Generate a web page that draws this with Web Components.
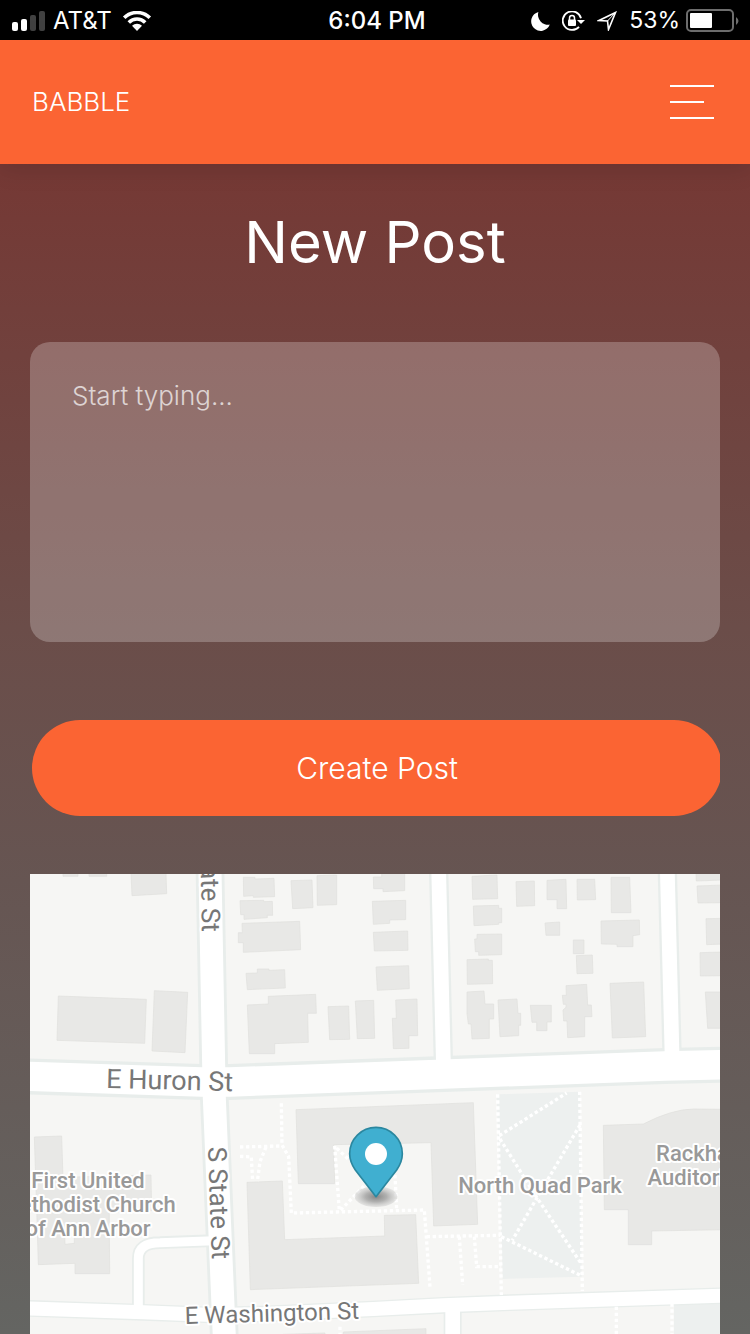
<!DOCTYPE html>
<html lang="en">
<head>
<meta charset="utf-8">
<meta name="viewport" content="width=device-width, initial-scale=1">
<title>Babble – New Post</title>
<style>
html{height:100%}
body{margin:0;min-height:100%;font-family:Inter,"Liberation Sans",sans-serif;color:#fff}
</style>
</head>
<body>
<babble-app></babble-app>

<script>
const define = (name, markup) => {
  const template = document.createElement('template');
  template.innerHTML = markup;
  customElements.define(name, class extends HTMLElement {
    constructor() {
      super();
      this.attachShadow({ mode: 'open' }).append(template.content.cloneNode(true));
    }
  });
};

define('status-bar', `
<style>
:host{display:grid;grid-template-columns:1fr auto 1fr;align-items:center;box-sizing:border-box;height:40px;padding:1px 10px 0 12px;background:#000;font-size:24px;line-height:39px}
div{display:flex;align-items:center}
.left{gap:8px}
.left .wifi{margin-left:2px}
.time{font-weight:500;padding-left:2px}
.right{justify-content:flex-end;gap:12px}
.power{gap:6px}
.power span{font-size:23px}
svg{display:block;flex:none}
</style>
<div class="left">
  <svg width="33" height="20" viewBox="0 0 33 20" aria-label="Signal"><g fill="#fff"><rect y="11" width="6" height="9" rx="2"/><rect x="9" y="8" width="6" height="12" rx="2"/></g><g fill="#414141"><rect x="18" y="4" width="6" height="16" rx="2"/><rect x="27" width="6" height="20" rx="2"/></g></svg>
  <span>AT&amp;T</span>
  <svg class="wifi" width="30" height="20" viewBox="0 0 30 20" aria-label="Wi-Fi"><g fill="none" stroke="#fff" stroke-width="3.600"><path d="M2.200 6.800a18.200 18.200 0 0 1 25.600 0"/><path d="M6.800 11.400a11.600 11.600 0 0 1 16.400 0"/></g><path fill="#fff" d="M10 14.800a7.100 7.100 0 0 1 10 0L15 20z"/></svg>
</div>
<div class="time">6:04 PM</div>
<div class="right">
  <svg width="19" height="20" viewBox="0 0 19 20" aria-label="Do not disturb"><path fill="#fff" d="M7.400 1A10 10 0 0 0 18.800 13.600 9.600 9.600 0 1 1 7.400 1z"/></svg>
  <svg width="23" height="20" viewBox="0 0 23 20" aria-label="Rotation lock"><path d="M19 7.200A9.300 9.300 0 1 0 17 15.800" fill="none" stroke="#fff" stroke-width="1.800"/><path d="M15 9h8l-4 4z" fill="#fff"/><rect x="6" y="8.500" width="8" height="6.500" rx="1" fill="#fff"/><path d="M7.500 9V7a2.500 2.500 0 0 1 5 0v2" fill="none" stroke="#fff" stroke-width="1.500"/></svg>
  <svg width="20" height="20" viewBox="0 0 20 20" aria-label="Location"><path d="M18.500 1.500L2 9.500l8.500.500 1 8.500z" fill="none" stroke="#fff" stroke-width="1.600"/><path d="M18 2L10.500 10" stroke="#fff"/></svg>
  <div class="power"><span>53%</span>
  <svg width="54" height="24" viewBox="0 0 54 24" aria-label="Battery"><rect x="1" y="1" width="46" height="21" rx="4" fill="none" stroke="#6e6e6e" stroke-width="2"/><rect x="4" y="4" width="22" height="15" rx="1" fill="#fff"/><path d="M50 8q5 4 0 8z" fill="#6e6e6e"/></svg></div>
</div>`);

define('app-header', `
<style>
:host{position:relative;display:flex;align-items:center;justify-content:space-between;height:124px;padding:0 36px 0 32px;background:#fb6433;box-shadow:0 4px 24px rgba(0,0,0,.12)}
a{color:#fff;text-decoration:none;font-size:26px;font-weight:300;line-height:30px}
button{display:flex;flex-direction:column;align-items:flex-start;gap:14px;width:44px;padding:0;border:0;background:none;cursor:pointer}
i{display:block;width:100%;height:2px;background:#fff}
i:nth-child(2){width:34px}
</style>
<a href="#"><slot></slot></a>
<button type="button" aria-label="Menu"><i></i><i></i><i></i></button>`);

define('post-composer', `
<style>
:host{display:block}
h1{margin:0 0 66px;font-size:58px;font-weight:400;line-height:68px;text-align:center}
textarea{display:block;box-sizing:border-box;width:100%;height:300px;margin:0 0 78px;padding:39px 42px;border:0;border-radius:20px;background:rgba(255,255,255,.24);color:#fff;font:300 26px/30px Inter,"Liberation Sans",sans-serif;resize:none;outline:0}
textarea::placeholder{color:#fff;opacity:.7}
.action{overflow:hidden}
button{display:block;width:100%;height:96px;margin:0 0 0 2px;border:0;border-radius:48px;background:#fb6433;color:#fff;font:300 30px/36px Inter,"Liberation Sans",sans-serif;cursor:pointer}
</style>
<form>
  <h1><slot></slot></h1>
  <textarea aria-label="Post text" placeholder="Start typing..."></textarea>
  <div class="action"><button type="button">Create Post</button></div>
</form>`);

define('location-map', `
<style>
:host{display:block;overflow:hidden;background:#f6f6f4}
svg{display:block;width:100%;height:100%;min-height:460px}
.case{fill:none;stroke:#e8edeb}
.road{fill:none;stroke:#fff}
.bld{fill:#e8e8e6;stroke:#dfdfdd;stroke-width:2}
.park{fill:#edf0ef}
.walk{fill:none;stroke:#fff;stroke-width:10;stroke-dasharray:10 8}
text{font-family:Roboto,"Liberation Sans",sans-serif;stroke:#fff;stroke-width:4px;stroke-linejoin:round;paint-order:stroke}
.street{fill:#777;font-size:26px}
.place{fill:#999;font-size:22px;font-weight:500;text-anchor:middle}
</style>
<svg viewBox="0 0 690 460" preserveAspectRatio="xMidYMin slice" role="img" aria-label="Map of the post location">
<defs>
  <radialGradient id="shade"><stop offset="0" stop-color="#555" stop-opacity=".7"/><stop offset=".5" stop-color="#777" stop-opacity=".55"/><stop offset="1" stop-color="#aaa" stop-opacity=".25"/></radialGradient>
  <path id="huron" d="M-10 607L515 624H600L1220 601L1905 576L2080 572"/>
  <path id="state" d="M540-10L551 573L553 673L583 1390"/>
  <path id="washington" d="M-10 1303L340 1315L545 1323L700 1320L1030 1305L1240 1294L1440 1286L2080 1265"/>
  <path id="north1" d="M1226-10L1241 600"/><path id="north2" d="M1912-10L1927 575"/>
  <path id="south" d="M1268 1295V1390"/>
  <path id="drive" d="M325 1310V1153Q325 1106 390 1106L550 1100"/>
</defs>
<g transform="scale(.33333)">
  <g class="park"><path d="M1400 661L1650 653L1655 1208L1418 1215z"/><path d="M1932 1270H2080V1390H1932z"/></g>
  <g class="case">
    <use href="#drive" stroke-width="38"/><use href="#south" stroke-width="54"/><use href="#washington" stroke-width="50"/>
    <use href="#north1" stroke-width="58"/><use href="#north2" stroke-width="58"/><use href="#state" stroke-width="86"/><use href="#huron" stroke-width="108"/>
  </g>
  <g class="road">
    <use href="#drive" stroke-width="27"/><use href="#south" stroke-width="44"/><use href="#washington" stroke-width="42"/>
    <use href="#north1" stroke-width="44"/><use href="#north2" stroke-width="44"/><use href="#state" stroke-width="69"/><use href="#huron" stroke-width="88"/>
  </g>
  <g class="bld">
    <!-- north-west block -->
    <g transform="translate(-30 -12)">
      <path d="M129 0H174V19H129zM207 0H260V19H207zM333 8H438L440 71L336 77z"/>
      <path d="M115 378L379 388L374 520L111 511zM403 362L503 367L495 548L396 543z"/>
    </g>
    <!-- houses east of State -->
    <g transform="translate(600 -12)">
      <path d="M40 22H75V27L132 25L134 80L70 82V77L41 79z"/>
      <path d="M183 32L246 30L249 113L188 116zM261 17L320 15V104L262 106z"/>
      <path d="M30 92L101 91V95L127 94L128 136H112V143L42 148V134H32z"/>
      <path d="M36 160L209 154L212 239L40 247V218H25V188H37z"/>
      <path d="M48 310L82 309V297H117V301L164 299L166 354L52 359z"/>
      <path d="M52 405L115 402V379L257 373L259 430H233L235 517L134 521V551H58z"/>
      <path d="M294 410L356 408L359 508L299 509zM376 393L431 391L434 505L382 506z"/>
      <path d="M430 21H455V5H524V62L459 65V56H431z"/>
      <path d="M427 94L527 91V149L479 150V160L430 163zM430 187L533 183L534 241L433 243zM438 291L536 287L538 356L442 361z"/>
      <path d="M497 390L561 387L563 497H537V535L490 536L487 445H499z"/>
    </g>
    <!-- houses north of Huron -->
    <g transform="translate(1320 -12)">
      <path d="M66 19L141 15L143 86L68 88zM70 108L146 106V115H155V158H146V163L72 167z" transform="translate(-60)"/>
      <g transform="translate(-60)">
      <path d="M81 193L155 192V254L86 256V245H76L74 207H81zM51 269L115 267V271H127L128 341L52 343z"/>
      <path d="M198 35L253 33L254 107L200 109zM291 31L348 28L350 116H321V89H291zM381 28H434L437 89L382 90zM483 22H539L543 128H484z"/>
      <path d="M285 159L329 156V196H288zM370 210H402V251H370zM379 257L427 255L429 310L381 311z"/>
      <path d="M453 153L568 150L569 194L549 197V230H501V223L454 222z"/>
      <path d="M51 366L102 363L105 402H131V447H118V505L66 507L63 462H55L51 430z"/>
      <path d="M144 390L201 387L204 430H212V466H206V497L150 500zM241 406H304V456H291V482H260V457H246z"/>
      <path d="M348 347L410 343L413 405H424L426 440H404V500L353 503L351 453H341L339 420L348 412V403H340L337 376H349z"/>
      <path d="M480 340L581 336L587 500L487 504z"/>
      <path d="M738 8H820V30L739 33zM741 48L820 45V98L744 99zM768 146L820 145V222L770 224zM750 248L820 246V317L751 318zM766 366H820V475H773z"/>
      </g>
    </g>
    <!-- church -->
    <g transform="translate(-30 633)"><path d="M43 156L125 153L129 277L393 270L395 377L268 382V441L269 566H165V535L55 539L50 370z"/><path fill="#f6f6f4" d="M133 420H163V475L135 478z"/></g>
    <!-- quad buildings -->
    <g transform="translate(630 633)">
      <path d="M168 74L700 53L713 418L581 423L573 173L281 179L284 296H175z"/>
      <path d="M21 292L127 288L134 464L434 453L433 391L527 389L536 595L31 614z"/>
      <path d="M310 741L558 731V760H310zM130 748L255 744V760H130z"/>
    </g>
    <g transform="translate(1350 633)"><path d="M370 121L490 117Q575 73 640 72L740 73V434L515 438V479H445V374H373z"/></g>
  </g>
  <g class="walk">
    <g transform="translate(630 633)">
      <path d="M124 55L126 180L146 215L154 384L553 375L570 605M0 186L120 183M0 214L34 216L38 290M78 186L60 230L52 290M284 183L298 378M290 190L325 222M302 375L375 300M465 270L470 375M560 455L780 451M658 455L668 600M703 455L710 545H783M300 725V747"/>
    </g>
    <g transform="translate(1350 633)">
      <path d="M53 28L64 630M299 20L307 618M58 152L260 24M60 162L170 337L305 538M300 120L170 340L97 466M64 455L305 573M409 665V747M576 655V747"/>
    </g>
  </g>
  <g transform="translate(630 633)">
    <ellipse cx="408" cy="335" rx="64" ry="31" fill="url(#shade)"/>
    <path d="M408 335L346 255C334 237 329 222 329 206A79 79 0 0 1 487 206C487 222 482 237 470 255z" fill="#40afd0" stroke="#2b879f" stroke-width="5" stroke-linejoin="round"/>
    <circle cx="408" cy="207" r="33" fill="#fff"/>
  </g>
</g>
<g class="street">
  <text transform="translate(76 214) rotate(1.400)" style="font-size:27px">E Huron St</text>
  <text transform="translate(155 450) rotate(-1.700)" style="font-size:24px">E Washington St</text>
  <text transform="translate(178 273) rotate(88)">S State St</text>
  <text transform="translate(172 58) rotate(89)" text-anchor="end">S State St</text>
</g>
<g class="place">
  <text x="58" y="314">First United</text><text x="58" y="338">Methodist Church</text><text x="58" y="362">of Ann Arbor</text>
  <text x="510" y="319">North Quad Park</text>
  <text x="672" y="287">Rackham</text><text x="672" y="311">Auditorium</text>
</g>
</svg>`);

define('babble-app', `
<style>
:host{display:flex;flex-direction:column;min-height:100vh;background:linear-gradient(#763a36 0,#753935 13%,#6b4d49 47%,#665552 66%,#646562 100%)}
main{display:flex;flex-direction:column;flex:1;padding:44px 30px 0}
location-map{flex:1;margin-top:58px}
</style>
<status-bar></status-bar>
<app-header>BABBLE</app-header>
<main>
  <post-composer>New Post</post-composer>
  <location-map></location-map>
</main>`);
</script>
</body>
</html>
